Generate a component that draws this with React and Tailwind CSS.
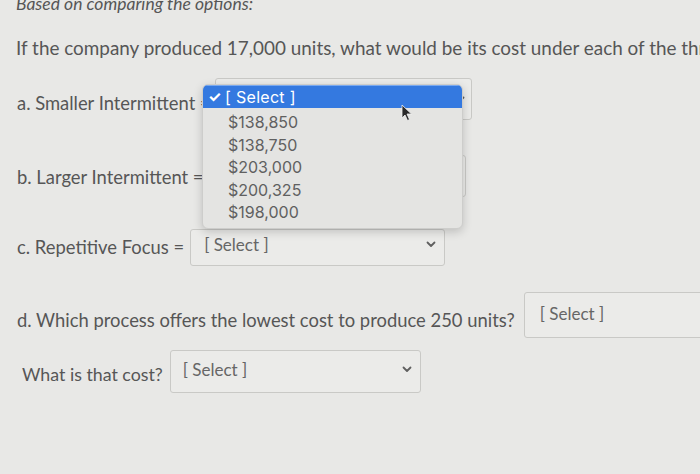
import React from "react";

function Chevron({ className = "" }) {
  return (
    <svg width="10" height="7" viewBox="0 0 10 7" className={className}>
      <path d="M1.5 1.5 L5 5 L8.5 1.5" fill="none" stroke="#5f5f5f" strokeWidth="1.8" strokeLinecap="round" strokeLinejoin="round" />
    </svg>
  );
}

function SelectBox({ className = "", chevron = true }) {
  return (
    <div className={`flex items-center justify-between border border-[#c9c9c6] rounded-[3px] bg-[#ebebe9] ${className}`}>
      <span className="text-[17px] text-[#666]">[ Select ]</span>
      {chevron && <Chevron className="mr-[8px]" />}
    </div>
  );
}

export default function App() {
  const items = ["$138,850", "$138,750", "$203,000", "$200,325", "$198,000"];
  return (
    <div
      className="relative w-[700px] h-[474px] overflow-hidden bg-[#e8e8e6] text-[#565656]"
      style={{ fontFamily: "Lato, 'Open Sans', sans-serif" }}
    >
      <div className="flex flex-col">
        <div className="mt-[-6px] pl-[16px] h-[20px] leading-[20px] text-[17.5px] italic whitespace-nowrap">
          Based on comparing the options:
        </div>
        <div className="mt-[22px] pl-[16px] h-[24px] leading-[24px] text-[18.9px] whitespace-nowrap">
          If the company produced 17,000 units, what would be its cost under each of the three
        </div>

        {/* a */}
        <div className="mt-[18px] h-[42px] flex items-start pl-[17px]">
          <span className="mt-[14px] text-[18.4px] leading-[22px] whitespace-nowrap">a. Smaller Intermittent =</span>
          <div className="ml-[4px] w-[257px] h-[42px] border border-[#c9c9c6] rounded-[3px] bg-[#ebebe9] flex items-center justify-end">
            <Chevron className="mr-[6px]" />
          </div>
        </div>

        {/* b */}
        <div className="mt-[35px] h-[42px] flex items-start pl-[17px]">
          <span className="mt-[11px] text-[18.4px] leading-[22px] whitespace-nowrap">b. Larger Intermittent =</span>
          <div className="ml-[10px] w-[252px] h-[42px] border border-[#c9c9c6] rounded-[3px] bg-[#ebebe9]" />
        </div>

        {/* c */}
        <div className="mt-[32px] h-[37px] flex items-start pl-[17px]">
          <span className="mt-[7px] text-[18.4px] leading-[22px] whitespace-nowrap">c. Repetitive Focus =</span>
          <SelectBox className="ml-[6px] w-[255px] h-[37px] pb-[6px] pl-[13px]" />
        </div>

        {/* d */}
        <div className="mt-[26px] h-[46px] flex items-start pl-[17px]">
          <span className="mt-[17px] text-[18.4px] leading-[22px] whitespace-nowrap">d. Which process offers the lowest cost to produce 250 units?</span>
          <SelectBox className="ml-[9px] w-[230px] h-[46px] pb-[3px] pl-[15px] shrink-0" chevron={false} />
        </div>

        {/* e */}
        <div className="mt-[12px] h-[43px] flex items-start pl-[22px]">
          <span className="mt-[13px] text-[17.8px] leading-[22px] whitespace-nowrap">What is that cost?</span>
          <SelectBox className="ml-[7px] w-[251px] h-[43px] pb-[4px] pl-[12px]" />
        </div>
      </div>

      {/* dropdown menu overlay */}
      <div
        className="absolute left-[202px] top-[84px] w-[261px] h-[145px] rounded-[6px] bg-[#e4e4e2] border border-[#cdcdcb] shadow-[0_3px_10px_rgba(0,0,0,0.18)] overflow-hidden"
        style={{ fontFamily: "Inter, 'Liberation Sans', sans-serif" }}
      >
        <div className="h-[23px] bg-[#3479e0] border-t border-[#7aa9ef] flex items-center text-white text-[16px]">
          <span className="w-[22px] pl-[5px] text-[15px] font-bold">✓</span>
          <span className="tracking-[0.3px]">[ Select ]</span>
        </div>
        <div className="flex flex-col pt-[3px] text-[16px] text-[#606060]">
          {items.map((t) => (
            <div key={t} className="h-[22.5px] leading-[22.5px] pl-[25px]">{t}</div>
          ))}
        </div>
      </div>

      {/* mouse cursor */}
      <svg className="absolute left-[401px] top-[104px]" width="12" height="18" viewBox="0 0 12 18">
        <path d="M1 1 L1 14 L4 11 L6.5 16.5 L8.5 15.5 L6 10 L10.5 10 Z" fill="#2a2a2a" stroke="#f2f2f2" strokeWidth="0.8" />
      </svg>
    </div>
  );
}
